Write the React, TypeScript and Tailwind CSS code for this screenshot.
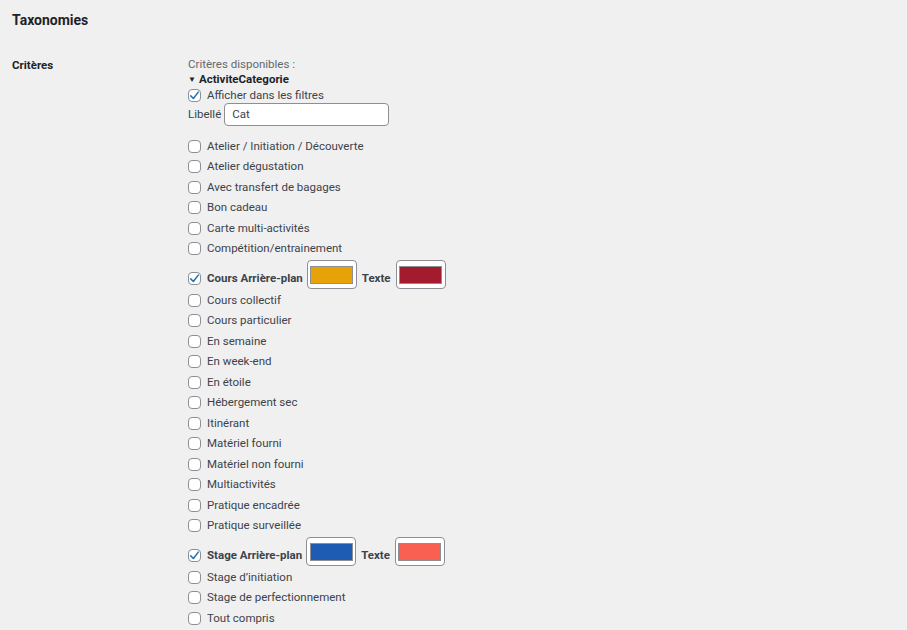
import React from "react";

const items1 = [
  "Atelier / Initiation / Découverte",
  "Atelier dégustation",
  "Avec transfert de bagages",
  "Bon cadeau",
  "Carte multi-activités",
  "Compétition/entrainement",
];
const items2 = [
  "Cours collectif",
  "Cours particulier",
  "En semaine",
  "En week-end",
  "En étoile",
  "Hébergement sec",
  "Itinérant",
  "Matériel fourni",
  "Matériel non fourni",
  "Multiactivités",
  "Pratique encadrée",
  "Pratique surveillée",
];
const items3 = ["Stage d’initiation", "Stage de perfectionnement", "Tout compris"];

function Box({ checked }: { checked?: boolean }) {
  return (
    <span className="relative block h-[13px] w-[13px] shrink-0 rounded-[4px] border border-[#8c8f94] bg-white">
      {checked && (
        <svg viewBox="0 0 20 20" className="absolute left-[-2px] top-[-2px] h-[15px] w-[15px]">
          <path
            d="M5 10.5 L8.5 14 L15 5.5"
            fill="none"
            stroke="#2271b1"
            strokeWidth="2"
            strokeLinecap="round"
            strokeLinejoin="round"
          />
        </svg>
      )}
    </span>
  );
}

function Row({ label }: { label: string }) {
  return (
    <div className="flex h-[20.5px] items-center gap-[6px]">
      <Box />
      <span>{label}</span>
    </div>
  );
}

function Swatch({ color }: { color: string }) {
  return (
    <span className="flex h-[29px] w-[50px] items-center justify-center rounded-[4px] border border-[#8c8f94] bg-white">
      <span className={`block h-[18px] w-[43px] border border-[#8c8f94] ${color}`} />
    </span>
  );
}

function ColorRow({ label, bg, fg }: { label: string; bg: string; fg: string }) {
  return (
    <div className="flex h-[31px] items-center">
      <span className="flex pt-[7px]">
        <Box checked />
      </span>
      <span className="ml-[6px] pt-[8px] font-bold">{label}</span>
      <span className="ml-[4px]">
        <Swatch color={bg} />
      </span>
      <span className="ml-[5px] pt-[9px] font-bold">Texte</span>
      <span className="ml-[5px]">
        <Swatch color={fg} />
      </span>
    </div>
  );
}

export default function App() {
  return (
    <div className="min-h-[630px] bg-[#f0f0f1] font-['Roboto',sans-serif] text-[11.5px] text-[#3c434a]">
      <h2 className="pl-3 pt-[11px] text-[14px] font-bold leading-[18px] text-[#1d2327]">Taxonomies</h2>
      <div className="mt-[27px] flex">
        <div className="w-[188px] shrink-0 pl-3 pt-[1px] font-bold leading-[16px] text-[#1d2327]">Critères</div>
        <div className="flex flex-col">
          <div className="leading-[16px] text-[#646970]">Critères disponibles :</div>
          <div className="flex items-center font-bold leading-[15px] text-[#1d2327]">
            <span className="mr-[3px] text-[8px]">▼</span>
            ActiviteCategorie
          </div>
          <div className="flex h-[17px] items-center gap-[6px]">
            <Box checked />
            <span>Afficher dans les filtres</span>
          </div>
          <div className="-mt-[1px] flex items-center gap-[3px]">
            <span>Libellé</span>
            <span className="flex h-[23px] w-[165px] items-center rounded-[4px] border border-[#8c8f94] bg-white px-[7px]">
              Cat
            </span>
          </div>
          <div className="h-[10px]" />
          {items1.map((l) => (
            <Row key={l} label={l} />
          ))}
          <ColorRow label="Cours Arrière-plan" bg="bg-[#e6a207]" fg="bg-[#a31b2c]" />
          {items2.map((l) => (
            <Row key={l} label={l} />
          ))}
          <ColorRow label="Stage Arrière-plan" bg="bg-[#1e5cb3]" fg="bg-[#f96052]" />
          {items3.map((l) => (
            <Row key={l} label={l} />
          ))}
        </div>
      </div>
    </div>
  );
}
